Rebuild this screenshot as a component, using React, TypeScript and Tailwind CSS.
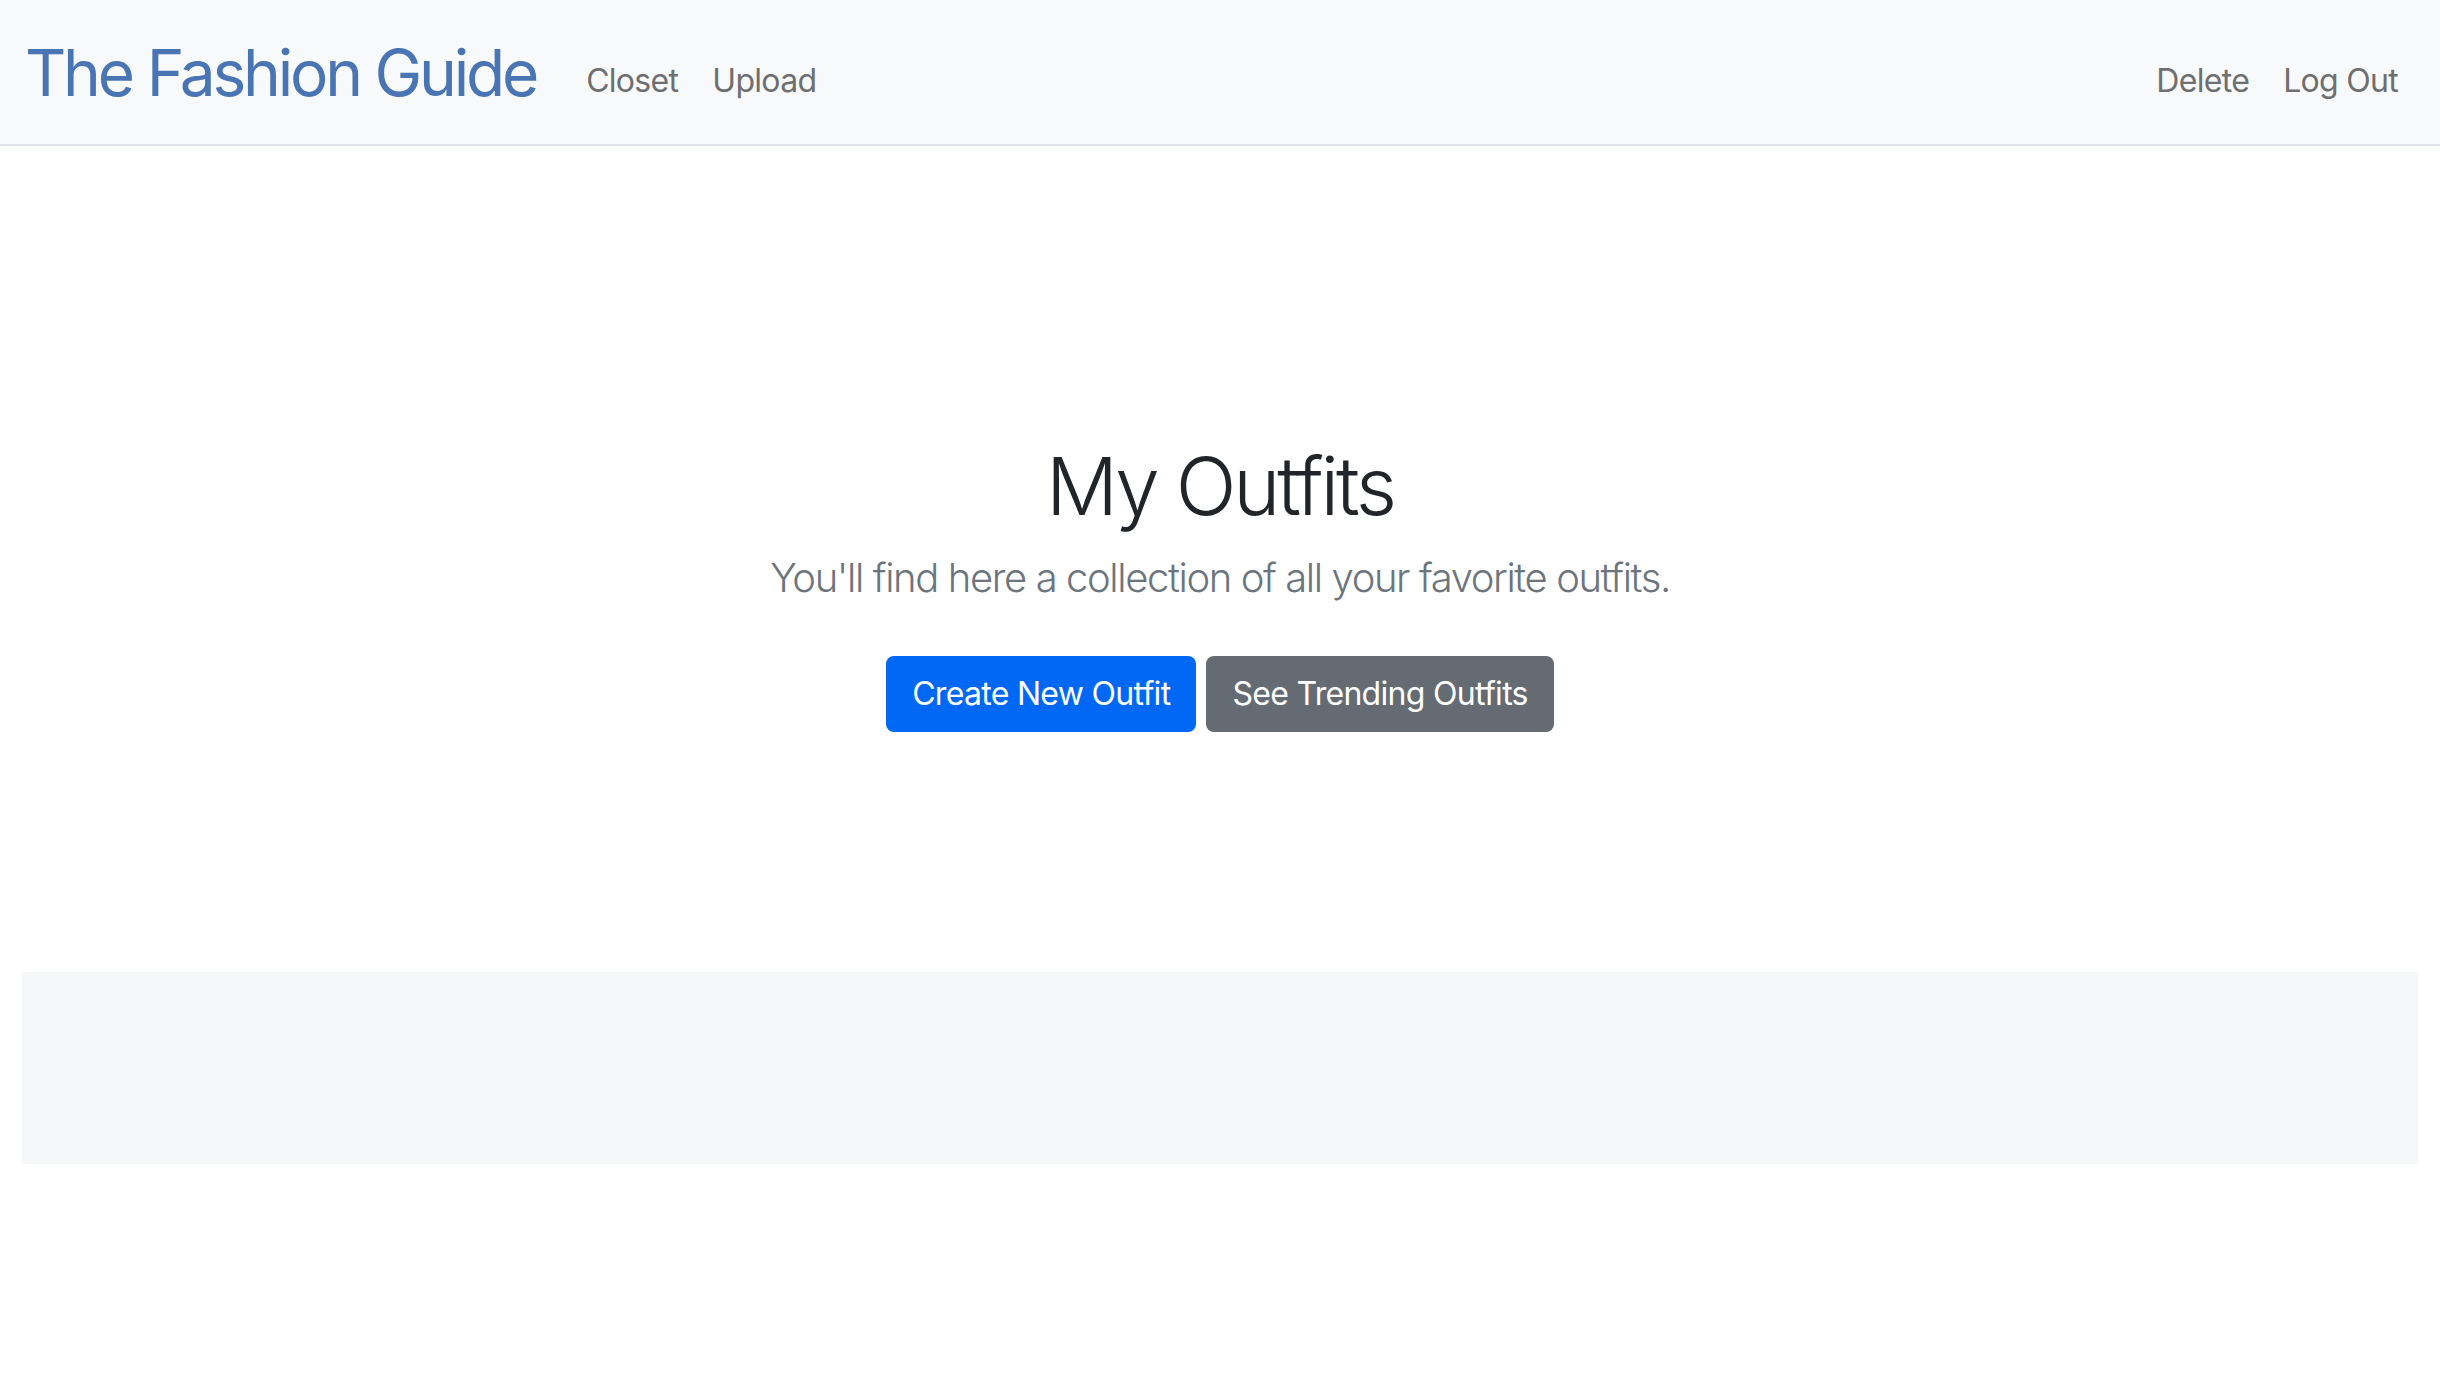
import React from "react";

const font = { fontFamily: "Inter, 'Noto Sans', 'Liberation Sans', sans-serif" };

function NavLink({ label }: { label: string }) {
  return (
    <a href="#" className="px-[17px] text-[32px] leading-[1.5] tracking-[-0.7px] text-[#6e6f70]">
      {label}
    </a>
  );
}

export default function App() {
  return (
    <div className="min-h-screen bg-white" style={font}>
      <nav className="flex h-[146px] items-center justify-between border-b-2 border-[#dee2e6] bg-[#f8f9fa] pl-[25px] pr-[25px]">
        <div className="flex items-center">
          <a href="#" className="mr-[33px] mt-[2px] text-[64px] leading-none tracking-[-3.2px] text-[#4a75b5]">
            The Fashion Guide
          </a>
          <div className="mt-[18px] flex items-center">
            <NavLink label="Closet" />
            <NavLink label="Upload" />
          </div>
        </div>
        <div className="mt-[18px] flex items-center">
          <NavLink label="Delete" />
          <NavLink label="Log Out" />
        </div>
      </nav>

      <main className="pt-[292px] text-center">
        <h1 className="text-[80px] font-light leading-[1.2] tracking-[-3.2px] text-[#212529]">My Outfits</h1>
        <p className="mt-[14px] text-[40px] font-light leading-[1.5] tracking-[-1.4px] text-[#6c757d]">
          You'll find here a collection of all your favorite outfits.
        </p>
        <div className="mt-[48px] flex justify-center gap-[10px]">
          <button className="h-[76px] rounded-[8px] bg-[#0068f5] px-[26px] text-[32px] tracking-[-0.7px] text-white">
            Create New Outfit
          </button>
          <button className="h-[76px] rounded-[8px] bg-[#646b72] px-[26px] text-[32px] tracking-[-0.7px] text-white">
            See Trending Outfits
          </button>
        </div>
      </main>

      <div className="mx-[22px] mt-[240px] h-[192px] bg-[#f6f7f9]"></div>
    </div>
  );
}
